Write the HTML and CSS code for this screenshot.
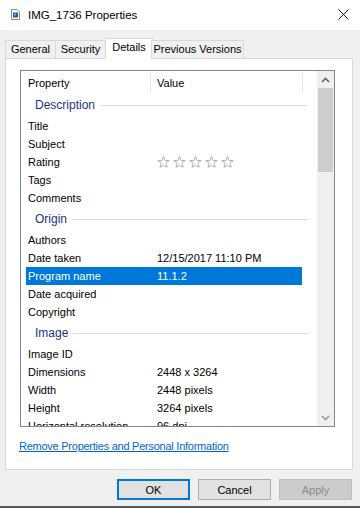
FILE: index.html
```html
<!DOCTYPE html>
<html lang="en">
<head>
  <meta charset="UTF-8" />
  <title>IMG_1736 Properties</title>
  <link rel="stylesheet" href="styles.css">
</head>
<body>
  <div class="window">
    <div class="titlebar">
      <svg class="app-icon" width="9" height="11" viewBox="0 0 9 11">
        <path d="M0.5 0.5 H6 L8.5 3 V10.5 H0.5 Z" fill="#fff" stroke="#8a8a8a" />
        <rect x="2" y="3.5" width="5" height="5" fill="#1f5fae" />
        <rect x="3" y="4.5" width="2" height="2" fill="#6fa8e0" />
      </svg>
      <span class="title">IMG_1736 Properties</span>
      <svg class="close-btn" width="11" height="11" viewBox="0 0 11 11">
        <path d="M0.5 0.5 L10.5 10.5 M10.5 0.5 L0.5 10.5" stroke="#111" stroke-width="1" />
      </svg>
    </div>

    <div class="tabs">
      <div class="tab tab-general">General</div>
      <div class="tab tab-security">Security</div>
      <div class="tab tab-details active">Details</div>
      <div class="tab tab-prev">Previous Versions</div>
    </div>

    <div class="panel">
      <div class="listbox">
        <div class="list">
          <div class="list-head">
            <div class="head-col col-prop">Property</div>
            <div class="head-col col-value">Value</div>
          </div>
          <div class="rows">
            <div class="group"><span>Description</span></div>
            <div class="row"><span>Title</span><span></span></div>
            <div class="row"><span>Subject</span><span></span></div>
            <div class="row">
              <span>Rating</span>
              <span class="stars">
                <svg width="13" height="13" viewBox="0 0 13 13"><polygon points="6.5,0.5 8.03,4.4 12.21,4.65 8.97,7.3 10.03,11.35 6.5,9.1 2.97,11.35 4.03,7.3 0.79,4.65 4.97,4.4" /></svg>
                <svg width="13" height="13" viewBox="0 0 13 13"><polygon points="6.5,0.5 8.03,4.4 12.21,4.65 8.97,7.3 10.03,11.35 6.5,9.1 2.97,11.35 4.03,7.3 0.79,4.65 4.97,4.4" /></svg>
                <svg width="13" height="13" viewBox="0 0 13 13"><polygon points="6.5,0.5 8.03,4.4 12.21,4.65 8.97,7.3 10.03,11.35 6.5,9.1 2.97,11.35 4.03,7.3 0.79,4.65 4.97,4.4" /></svg>
                <svg width="13" height="13" viewBox="0 0 13 13"><polygon points="6.5,0.5 8.03,4.4 12.21,4.65 8.97,7.3 10.03,11.35 6.5,9.1 2.97,11.35 4.03,7.3 0.79,4.65 4.97,4.4" /></svg>
                <svg width="13" height="13" viewBox="0 0 13 13"><polygon points="6.5,0.5 8.03,4.4 12.21,4.65 8.97,7.3 10.03,11.35 6.5,9.1 2.97,11.35 4.03,7.3 0.79,4.65 4.97,4.4" /></svg>
              </span>
            </div>
            <div class="row"><span>Tags</span><span></span></div>
            <div class="row"><span>Comments</span><span></span></div>

            <div class="group"><span>Origin</span></div>
            <div class="row"><span>Authors</span><span></span></div>
            <div class="row"><span>Date taken</span><span>12/15/2017 11:10 PM</span></div>
            <div class="row selected"><span>Program name</span><span>11.1.2</span></div>
            <div class="row"><span>Date acquired</span><span></span></div>
            <div class="row"><span>Copyright</span><span></span></div>

            <div class="group"><span>Image</span></div>
            <div class="row"><span>Image ID</span><span></span></div>
            <div class="row"><span>Dimensions</span><span>2448 x 3264</span></div>
            <div class="row"><span>Width</span><span>2448 pixels</span></div>
            <div class="row"><span>Height</span><span>3264 pixels</span></div>
            <div class="row"><span>Horizontal resolution</span><span>96 dpi</span></div>
          </div>
        </div>
        <div class="scrollbar">
          <div class="arrow">
            <svg width="9" height="6" viewBox="0 0 9 6"><path d="M1 5 L4.5 1.5 L8 5" fill="none" stroke="#606060" stroke-width="1.6" /></svg>
          </div>
          <div class="thumb"></div>
          <div class="track"></div>
          <div class="arrow">
            <svg width="9" height="6" viewBox="0 0 9 6"><path d="M1 1 L4.5 4.5 L8 1" fill="none" stroke="#9a9a9a" stroke-width="1.6" /></svg>
          </div>
        </div>
      </div>
      <a class="remove-link" href="#">Remove Properties and Personal Information</a>
    </div>

    <div class="buttons">
      <button class="btn default">OK</button>
      <button class="btn">Cancel</button>
      <button class="btn disabled">Apply</button>
    </div>
  </div>
</body>
</html>
```

FILE: styles.css
```css
body {
  margin: 0;
  background: #f0f0f0;
  font-family: "Liberation Sans", Arial, sans-serif;
  font-size: 11px;
  color: #000;
}

.window {
  width: 360px;
  height: 508px;
  box-sizing: border-box;
  border-bottom: 2px solid #5a5a5a;
}

/* Title bar */
.titlebar {
  height: 30px;
  background: #fff;
  display: flex;
  align-items: center;
  padding-left: 11px;
}
.app-icon {
  margin-top: -1px;
}
.title {
  margin-left: 8px;
  font-size: 11.5px;
  flex: 1;
}
.close-btn {
  margin-right: 11px;
  margin-top: -2px;
}

/* Tabs */
.tabs {
  display: flex;
  align-items: flex-end;
  height: 21px;
  margin-top: 8px;
  margin-bottom: -1px;
  padding-left: 5px;
  position: relative;
  z-index: 1;
}
.tab {
  height: 19px;
  box-sizing: border-box;
  border: 1px solid #d9d9d9;
  background: #f0f0f0;
  display: flex;
  align-items: center;
  justify-content: center;
  padding-bottom: 1px;
  margin-left: -1px;
}
.tab-general { width: 51px; margin-left: 0; }
.tab-security { width: 51px; }
.tab-details { width: 48px; }
.tab-prev { width: 93px; }
.tab.active {
  height: 21px;
  background: #fff;
  border-bottom-color: #fff;
  padding-bottom: 3px;
  margin-right: -1px;
}

/* Panel */
.panel {
  width: 348px;
  height: 412px;
  margin-left: 5px;
  box-sizing: border-box;
  background: #fff;
  border: 1px solid #d9d9d9;
  padding: 11px 0 0 14px;
}

.listbox {
  width: 315px;
  height: 357px;
  box-sizing: border-box;
  border: 1px solid #828790;
  display: flex;
}
.list {
  flex: 1;
  overflow: hidden;
}

.list-head {
  display: flex;
  height: 22px;
  margin-left: 5px;
}
.head-col {
  display: flex;
  align-items: center;
  border-right: 1px solid #e5e5e5;
  margin: 2px 0 0;
}
.col-prop {
  width: 122px;
  padding-left: 2px;
}
.col-value {
  width: 145px;
  padding-left: 6px;
}

.rows {
  margin-left: 5px;
  width: 282px;
}
.group {
  height: 24px;
  display: flex;
  align-items: center;
  padding-left: 9px;
  color: #1e3287;
  font-size: 12px;
}
.group::after {
  content: "";
  flex: 1;
  height: 1px;
  background: #d5dde5;
  margin-left: 5px;
}
.row {
  width: 276px;
  height: 18px;
  display: grid;
  grid-template-columns: 131px 1fr;
  align-items: center;
  white-space: nowrap;
}
.row span:first-child {
  padding-left: 2px;
}
.row.selected {
  background: #0078d7;
  color: #fff;
}

.stars {
  display: flex;
  gap: 3px;
  margin-top: 1px;
}
.stars polygon {
  fill: #fff;
  stroke: #a8a8a8;
  stroke-width: 0.9;
  stroke-linejoin: round;
}

/* Scrollbar */
.scrollbar {
  width: 17px;
  background: #f0f0f0;
  display: flex;
  flex-direction: column;
}
.arrow {
  height: 17px;
  display: flex;
  align-items: center;
  justify-content: center;
}
.thumb {
  height: 84px;
  margin: 0 1px;
  background: #cdcdcd;
}
.track {
  flex: 1;
}

.remove-link {
  display: block;
  width: max-content;
  margin-top: 12px;
  margin-left: -1px;
  color: #0066cc;
  line-height: 14px;
  letter-spacing: -0.25px;
}

/* Buttons */
.buttons {
  display: flex;
  justify-content: flex-end;
  gap: 8px;
  margin-top: 9px;
  padding-right: 8px;
}
.btn {
  width: 73px;
  height: 21px;
  box-sizing: border-box;
  background: #e1e1e1;
  border: 1px solid #adadad;
  font-family: inherit;
  font-size: 11px;
  color: #000;
  padding: 0;
}
.btn.default {
  border: 2px solid #0078d7;
}
.btn.disabled {
  background: #cccccc;
  border-color: #bfbfbf;
  color: #8a8a8a;
}
```
